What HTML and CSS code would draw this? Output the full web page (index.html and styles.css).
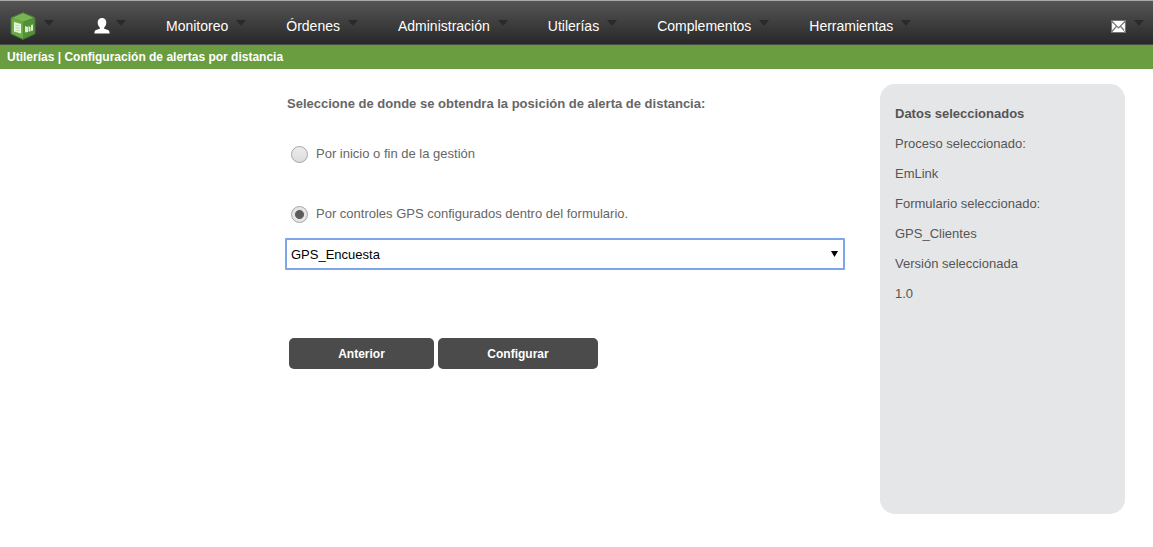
FILE: index.html
```html
<!DOCTYPE html>
<html lang="es">
<head>
<meta charset="utf-8">
<meta name="viewport" content="width=device-width, initial-scale=1">
<title>Configuración de alertas por distancia</title>
<link rel="stylesheet" href="styles.css">
</head>
<body>
<header>
  <nav class="navbar" aria-label="Principal">
    <a class="nav-item nav-home" href="#" aria-label="Inicio">
      <svg class="logo" viewBox="0 0 26 28" aria-hidden="true">
        <path fill="#78b552" d="M13 .5 25 5.500 13 10 1 5.500z"/>
        <path fill="#6aad45" d="M1 5.500 13 10V27.500L1 22z"/>
        <path fill="#528f35" d="M25 5.500 13 10V27.500L25 22z"/>
        <path fill="none" stroke="#47703a" d="M13 .6 25 5.800V21.800L13 27.400 1 21.800V5.800z"/>
        <path fill="#e8f5df" d="M4 10 11 12V21.500L4 19.500z"/>
        <path fill="none" stroke="#b5d5a2" d="M5.500 13 9.500 14M5.500 15.500 9.500 16.500M5.500 18 9.500 19"/>
        <path fill="#d9edcc" d="M15 14 18 15V20L15 20.500zM18.500 14 20.500 15V19.500L18.500 19.500zM21 13 23 12.500V18.500L21 19z"/>
      </svg>
      <span class="caret"></span>
    </a>
    <a class="nav-item nav-user" href="#" aria-label="Usuario">
      <svg class="user-icon" viewBox="0 0 16 16" aria-hidden="true">
        <path fill="#fff" d="M8 0C10.700 0 12.300 1.900 12.300 4.500 12.300 6.800 11.400 8.500 10.200 9.400V10.800L14 12C15.200 12.500 15.600 13.600 15.600 15.500H.4C.4 13.600.8 12.500 2 12L5.800 10.800V9.400C4.600 8.500 3.700 6.800 3.700 4.500 3.700 1.900 5.300 0 8 0z"/>
      </svg>
      <span class="caret"></span>
    </a>
    <a class="nav-item" href="#">Monitoreo<span class="caret"></span></a>
    <a class="nav-item" href="#">Órdenes<span class="caret"></span></a>
    <a class="nav-item" href="#">Administración<span class="caret"></span></a>
    <a class="nav-item" href="#">Utilerías<span class="caret"></span></a>
    <a class="nav-item" href="#">Complementos<span class="caret"></span></a>
    <a class="nav-item" href="#">Herramientas<span class="caret"></span></a>
    <a class="nav-item nav-mail" href="#" aria-label="Mensajes">
      <svg class="mail-icon" viewBox="0 0 15 13" aria-hidden="true">
        <path fill="#fff" d="M0 0H15V13H0z"/>
        <path fill="none" stroke="#777" stroke-width="1.200" d="M.5 .5H14.500V12.500H.5zM.5 1 7.500 8 14.500 1M.5 12 5.300 6.500M14.500 12 9.700 6.500"/>
      </svg>
      <span class="caret"></span>
    </a>
  </nav>
  <div class="breadcrumb">Utilerías | Configuración de alertas por distancia</div>
</header>
<div class="layout">
  <main>
    <form class="form">
      <h1 class="title" id="source-title">Seleccione de donde se obtendra la posición de alerta de distancia:</h1>
      <div class="options" role="radiogroup" aria-labelledby="source-title">
        <label class="option"><input class="radio" type="radio" name="source">Por inicio o fin de la gestión</label>
        <label class="option"><input class="radio" type="radio" name="source" checked>Por controles GPS configurados dentro del formulario.</label>
      </div>
      <div class="select-wrap">
        <select class="select" aria-label="Control GPS"><option>GPS_Encuesta</option></select>
        <svg class="select-arrow" viewBox="0 0 7 6" aria-hidden="true"><path d="M0 0H7L3.500 6z"/></svg>
      </div>
      <div class="actions">
        <button class="button" type="button">Anterior</button>
        <button class="button button-wide" type="button">Configurar</button>
      </div>
    </form>
  </main>
  <aside class="summary">
    <h2 class="summary-title">Datos seleccionados</h2>
    <p>Proceso seleccionado:</p>
    <p>EmLink</p>
    <p>Formulario seleccionado:</p>
    <p>GPS_Clientes</p>
    <p>Versión seleccionada</p>
    <p>1.0</p>
  </aside>
</div>
</body>
</html>
```
FILE: styles.css
```css
* { box-sizing: border-box; }

body {
  margin: 0;
  background: #fff;
  color: #666;
  font: 13px/16px "Liberation Sans", Arial, sans-serif;
}

.navbar {
  display: flex;
  align-items: center;
  gap: 40px;
  height: 45px;
  padding: 7px 9px 0 10px;
  border-top: 1px solid #a8a8a8;
  border-bottom: 1px solid #4a4a4a;
  background: linear-gradient(#555, #282828);
}

.nav-item {
  display: flex;
  align-items: center;
  gap: 8px;
  color: #fff;
  font-size: 14px;
  text-decoration: none;
}

.nav-user { gap: 6px; }
.nav-mail { margin-left: auto; }

.caret {
  margin-bottom: 7px;
  border: 5px solid transparent;
  border-top: 6px solid #2a2a2a;
  border-bottom: 0;
}

.logo { width: 26px; height: 28px; }
.user-icon { width: 16px; height: 16px; }
.mail-icon { width: 15px; height: 13px; }

.breadcrumb {
  padding: 4px 7px;
  background: #6a9c40;
  color: #fff;
  font-size: 12px;
  font-weight: bold;
}

.layout {
  display: grid;
  grid-template-columns: minmax(0, 1fr) 245px;
  gap: 35px;
  padding: 15px 28px 32px 24px;
}

.form {
  max-width: 560px;
  margin-left: auto;
  padding-top: 12px;
}

.title {
  margin: 0 2px;
  font-size: 13px;
  line-height: 16px;
}

.options {
  display: grid;
  gap: 42px;
  padding: 33px 6px 15px;
}

.option {
  display: flex;
  align-items: center;
  gap: 8px;
  line-height: 18px;
}

.radio {
  appearance: none;
  width: 17px;
  height: 17px;
  margin: 0;
  border: 1px solid #a5a5a5;
  border-radius: 50%;
  background: linear-gradient(#ededed, #dcdcdc);
}

.radio:checked {
  background: radial-gradient(circle, #5c5c5c 0 4px, #e5e5e5 5px);
}

.select-wrap {
  display: grid;
  align-items: center;
}

.select {
  grid-area: 1 / 1;
  appearance: none;
  width: 100%;
  height: 32px;
  padding: 1px 4px 0;
  border: 2px solid #7da5e8;
  border-radius: 1px;
  background: #fff;
  color: #000;
  font: inherit;
}

.select-arrow {
  grid-area: 1 / 1;
  justify-self: end;
  width: 7px;
  height: 6px;
  margin-right: 7px;
  pointer-events: none;
}

.actions {
  display: flex;
  gap: 4px;
  padding: 68px 4px 0;
}

.button {
  width: 145px;
  height: 31px;
  border: 0;
  border-radius: 5px;
  background: #4b4b4b;
  color: #fff;
  font: bold 12px "Liberation Sans", Arial, sans-serif;
}

.button-wide { width: 160px; }

.summary {
  min-height: 430px;
  padding: 22px 15px;
  border-radius: 15px;
  background: #e5e6e8;
  color: #555;
}

.summary-title {
  margin: 0;
  font-size: 13px;
  line-height: 16px;
}

.summary p { margin: 14px 0; }
```
